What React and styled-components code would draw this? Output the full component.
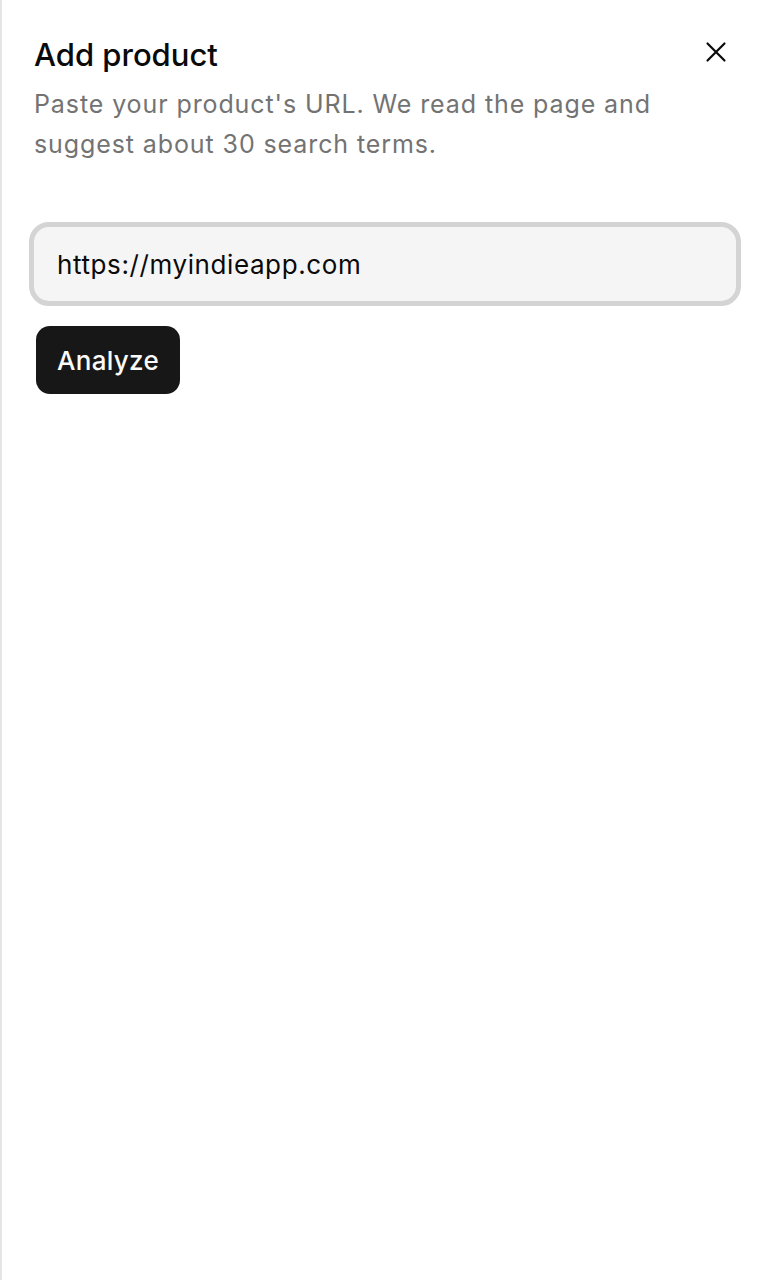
import React from "react";
import styled, { createGlobalStyle } from "styled-components";

const GlobalStyle = createGlobalStyle`
  html, body {
    margin: 0;
    padding: 0;
    background: #ffffff;
  }
  body {
    font-family: Inter, "Liberation Sans", sans-serif;
    color: #0a0a0a;
  }
`;

const Panel = styled.aside`
  box-sizing: border-box;
  min-height: 1280px;
  border-left: 2px solid #e5e5e5;
  padding: 35px 28px 0 28px;
`;

const Header = styled.header`
  display: flex;
  align-items: flex-start;
  justify-content: space-between;
  gap: 12px;
  padding-left: 4px;
`;

const Title = styled.h2`
  margin: 0;
  font-size: 31px;
  line-height: 40px;
  font-weight: 500;
  color: #0a0a0a;
`;

const Description = styled.p`
  margin: 9px 0 0;
  font-size: 25px;
  line-height: 40px;
  letter-spacing: 0.9px;
  color: #737373;
`;

const CloseButton = styled.button`
  flex: none;
  display: flex;
  align-items: center;
  justify-content: center;
  width: 32px;
  height: 32px;
  margin: 1px 8px 0 0;
  padding: 0;
  border: none;
  background: transparent;
  color: #0a0a0a;
  cursor: pointer;
`;

const Form = styled.form`
  display: flex;
  flex-direction: column;
  align-items: flex-start;
  gap: 20px;
  margin-top: 58px;
`;

const UrlInput = styled.input`
  box-sizing: border-box;
  width: calc(100% + 2px);
  height: 84px;
  margin: 0 -1px;
  padding: 0 23px;
  border: 5px solid #d4d4d4;
  border-radius: 20px;
  background: #f5f5f5;
  font-family: inherit;
  font-size: 26px;
  letter-spacing: 0.6px;
  color: #0a0a0a;
  outline: none;
`;

const Button = styled.button`
  margin-left: 6px;
  height: 68px;
  padding: 0 21px;
  border: none;
  border-radius: 14px;
  background: #171717;
  color: #fafafa;
  font-family: inherit;
  font-size: 26px;
  font-weight: 500;
  letter-spacing: 0.3px;
  cursor: pointer;
`;

const CloseIcon = () => (
  <svg width="24" height="24" viewBox="0 0 24 24" fill="none" stroke="currentColor" strokeWidth="2.2" strokeLinecap="round">
    <path d="M3.5 3.5 L20.5 20.5 M20.5 3.5 L3.5 20.5" />
  </svg>
);

export default function App() {
  return (
    <>
      <GlobalStyle />
      <Panel>
        <Header>
          <div>
            <Title>Add product</Title>
            <Description>
              Paste your product's URL. We read the page and suggest about 30 search terms.
            </Description>
          </div>
          <CloseButton type="button" aria-label="Close">
            <CloseIcon />
          </CloseButton>
        </Header>
        <Form onSubmit={(e) => e.preventDefault()}>
          <UrlInput type="url" defaultValue="https://myindieapp.com" />
          <Button type="submit">Analyze</Button>
        </Form>
      </Panel>
    </>
  );
}
